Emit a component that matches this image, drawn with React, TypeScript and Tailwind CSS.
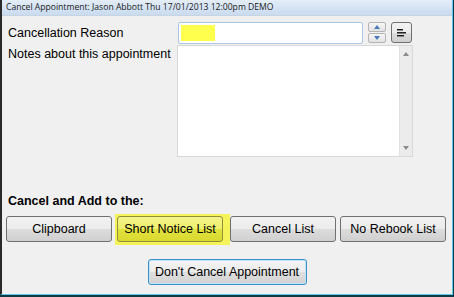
import React from "react";

const btn =
  "h-[26px] w-[106px] rounded-[3px] border border-[#707070] bg-[linear-gradient(#f2f2f2_0%,#ebebeb_50%,#dddddd_50%,#cfcfcf_100%)] text-[12.5px] text-black flex items-center justify-center";

function AlignIcon() {
  return (
    <svg width="10" height="8" viewBox="0 0 10 8">
      <rect x="0" y="0" width="6" height="1.5" fill="#222" />
      <rect x="0" y="3" width="9" height="1.5" fill="#222" />
      <rect x="0" y="6" width="7" height="1.5" fill="#222" />
    </svg>
  );
}

function Tri({ up }: { up?: boolean }) {
  return (
    <svg width="6" height="4" viewBox="0 0 6 4">
      <path d={up ? "M0 4 L3 0 L6 4 Z" : "M0 0 L3 4 L6 0 Z"} fill="#4a78b8" />
    </svg>
  );
}

function GreyTri({ up }: { up?: boolean }) {
  return (
    <svg width="6" height="4" viewBox="0 0 6 4">
      <path d={up ? "M0 4 L3 0 L6 4 Z" : "M0 0 L3 4 L6 0 Z"} fill="#8a8a8a" />
    </svg>
  );
}

export default function App() {
  return (
    <div
      className="w-[454px] h-[297px] bg-[#0f3a44] pr-[1px] pb-[2px]"
      style={{ fontFamily: '"Liberation Sans", Arial, sans-serif' }}
    >
      <div className="h-full flex flex-col border-l-2 border-l-[#2a2a2a] border-r border-r-[#5cc8ec] border-b border-b-[#5cc8ec] bg-[#f0f0f0]">
        {/* Title bar */}
        <div className="h-[16px] flex items-center pl-[4px] border-b border-[#c8d4e2] bg-[linear-gradient(#e4edf8,#c9dbef)]">
          <span
            className="text-[8.6px] text-[#1a1a1a] leading-none whitespace-nowrap"
            style={{ fontFamily: '"Open Sans", "Noto Sans", sans-serif' }}
          >
            Cancel Appointment: Jason Abbott Thu 17/01/2013 12:00pm DEMO
          </span>
        </div>

        {/* Cancellation reason row */}
        <div className="flex mt-[6px] h-[22px]">
          <div className="w-[176px] pl-[6px] text-[12.5px] leading-[22px] text-black whitespace-nowrap">
            Cancellation Reason
          </div>
          <div className="w-[185px] h-[22px] border border-[#a9c6e6] rounded-[2px] bg-white p-[2px]">
            <div className="w-[34px] h-full bg-[#ffff4d]" />
          </div>
          <div className="ml-[5px] w-[18px] flex flex-col gap-[1px]">
            <div className="h-[10px] border border-[#b4b4b4] rounded-[2px] bg-[linear-gradient(#f6f6f6,#e2e2e2)] flex items-center justify-center">
              <Tri up />
            </div>
            <div className="h-[10px] border border-[#b4b4b4] rounded-[2px] bg-[linear-gradient(#f6f6f6,#e2e2e2)] flex items-center justify-center">
              <Tri />
            </div>
          </div>
          <div className="ml-[5px] w-[21px] h-[21px] border border-[#707070] rounded-[3px] bg-[linear-gradient(#f2f2f2_0%,#ebebeb_50%,#dddddd_50%,#cfcfcf_100%)] flex items-center justify-center">
            <AlignIcon />
          </div>
        </div>

        {/* Notes row */}
        <div className="flex mt-[1px] h-[112px]">
          <div className="w-[175px] pl-[6px] text-[12.5px] leading-[16px] pt-[1px] text-black whitespace-nowrap">
            Notes about this appointment
          </div>
          <div className="w-[236px] h-full flex border border-[#d8d8d8] bg-white">
            <div className="flex-1" />
            <div className="w-[13px] h-full bg-[#ececec] border-l border-[#e2e2e2] flex flex-col items-center justify-between py-[6px]">
              <GreyTri up />
              <GreyTri />
            </div>
          </div>
        </div>

        {/* Cancel and add */}
        <div className="mt-[36px] pl-[6px] text-[12.5px] font-bold leading-[16px] text-black">
          Cancel and Add to the:
        </div>

        <div className="flex mt-[7px] pl-[4px]">
          <div className={btn}>Clipboard</div>
          <div className="relative ml-[5px]">
            <span className="absolute left-[-2px] right-[-7px] top-[-2px] bottom-[-3px] bg-[#f4f45a]" />
            <div className="relative h-[26px] w-[106px] rounded-[3px] border border-[#8f8f3a] bg-[linear-gradient(#f4f48a_0%,#eeee6c_50%,#e2e23e_50%,#d9d930_100%)] text-[12.5px] text-black flex items-center justify-center">
              Short Notice List
            </div>
          </div>
          <div className={`${btn} ml-[7px] relative`}>Cancel List</div>
          <div className={`${btn} ml-[4px]`}>No Rebook List</div>
        </div>

        <div className="flex justify-center mt-[17px]">
          <div className="h-[26px] w-[159px] rounded-[3px] border border-[#3c8fc8] bg-[linear-gradient(#f4f4f4_0%,#ececec_50%,#dfdfdf_50%,#d2d2d2_100%)] shadow-[inset_0_0_0_1px_#bfe4f8] text-[12.5px] text-black flex items-center justify-center">
            Don&apos;t Cancel Appointment
          </div>
        </div>
      </div>
    </div>
  );
}
